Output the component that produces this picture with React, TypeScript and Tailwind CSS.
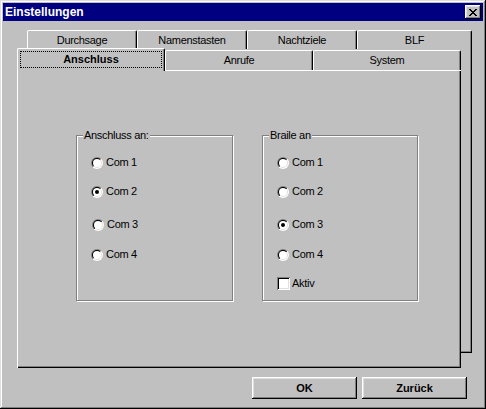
import React from "react";

const font = { fontFamily: '"Liberation Sans", Arial, sans-serif' };

function Radio({ checked }: { checked?: boolean }) {
  return (
    <svg width="12" height="12" viewBox="0 0 12 12" className="shrink-0">
      <defs>
        <linearGradient id="rg1" x1="0" y1="0" x2="1" y2="1">
          <stop offset="50%" stopColor="#808080" />
          <stop offset="50%" stopColor="#ffffff" />
        </linearGradient>
        <linearGradient id="rg2" x1="0" y1="0" x2="1" y2="1">
          <stop offset="50%" stopColor="#000000" />
          <stop offset="50%" stopColor="#dfdfdf" />
        </linearGradient>
      </defs>
      <circle cx="6" cy="6" r="6" fill="url(#rg1)" />
      <circle cx="6" cy="6" r="5" fill="url(#rg2)" />
      <circle cx="6" cy="6" r="4" fill="#ffffff" />
      {checked && <circle cx="6" cy="6" r="2" fill="#000000" />}
    </svg>
  );
}

function RadioRow({ label, checked, extra = "" }: { label: string; checked?: boolean; extra?: string }) {
  return (
    <div className={`flex h-[13px] items-center gap-[3px] ${extra}`}>
      <Radio checked={checked} />
      <span className="text-[11px] leading-none text-black tracking-[-0.3px]">{label}</span>
    </div>
  );
}

function GroupBox({ title, width, children }: { title: string; width: string; children: React.ReactNode }) {
  return (
    <div
      className={`relative ${width} h-[166px] border border-[#808080] shadow-[inset_1px_1px_#fff,1px_1px_#fff] pl-[14px] pt-[20px]`}
    >
      <span className="absolute -top-[7px] left-[6px] bg-[#c0c0c0] px-[1px] text-[11px] leading-[13px] text-black tracking-[-0.3px]">
        {title}
      </span>
      {children}
    </div>
  );
}

const tabBack =
  "flex h-[19px] items-center justify-center rounded-t-[2px] border-l border-t border-r border-l-white border-t-white border-r-black shadow-[inset_-1px_0_#808080] text-[11px] text-black tracking-[-0.3px]";

export default function App() {
  return (
    <div
      style={font}
      className="relative flex h-[409px] w-[486px] flex-col bg-[#c0c0c0] shadow-[inset_-1px_-1px_#000,inset_1px_1px_#dfdfdf,inset_-2px_-2px_#808080,inset_2px_2px_#fff]"
    >
      {/* Title bar */}
      <div className="mx-[3px] mt-[3px] flex h-[18px] items-center justify-between bg-[#000080] pl-[2px] pr-[2px]">
        <span className="text-[12px] font-bold leading-none text-white">Einstellungen</span>
        <div className="flex h-[14px] w-[16px] items-center justify-center bg-[#c0c0c0] shadow-[inset_-1px_-1px_#000,inset_1px_1px_#fff,inset_-2px_-2px_#808080,inset_2px_2px_#dfdfdf]">
          <svg width="8" height="7" viewBox="0 0 8 7" shapeRendering="crispEdges">
            <path
              d="M0 0h2v1h-2zM6 0h2v1h-2zM1 1h2v1h-2zM5 1h2v1h-2zM2 2h4v1h-4zM3 3h2v1h-2zM2 4h4v1h-4zM1 5h2v1h-2zM5 5h2v1h-2zM0 6h2v1h-2zM6 6h2v1h-2z"
              fill="#000"
            />
          </svg>
        </div>
      </div>

      {/* Tabs area */}
      <div className="ml-[17px] mt-[9px] grid">
        {/* Back layer */}
        <div className="col-start-1 row-start-1 ml-[10px] flex h-[323px] w-[445px] flex-col">
          <div className="flex">
            <div className={`${tabBack} w-[110px]`}>Durchsage</div>
            <div className={`${tabBack} w-[110px]`}>Namenstasten</div>
            <div className={`${tabBack} w-[110px]`}>Nachtziele</div>
            <div className={`${tabBack} w-[115px]`}>BLF</div>
          </div>
          <div className="flex-1 border-r border-b border-black shadow-[inset_-1px_-1px_#808080]"></div>
        </div>

        {/* Front layer */}
        <div className="col-start-1 row-start-1 mt-[18px] flex h-[320px] w-[444px] flex-col">
          <div className="flex items-end">
            <div className="relative z-10 -mb-px flex h-[23px] w-[148px] items-start justify-center rounded-t-[2px] border-l border-t border-r border-l-white border-t-white border-r-black bg-[#c0c0c0] px-[2px] pt-[2px] shadow-[inset_-1px_0_#808080]">
              <div className="flex h-[17px] w-full items-center justify-center border border-dotted border-black">
                <span className="text-[11px] font-bold text-black">Anschluss</span>
              </div>
            </div>
            <div className={`${tabBack} h-[20px] w-[148px]`}>Anrufe</div>
            <div className={`${tabBack} h-[20px] w-[148px]`}>System</div>
          </div>
          <div className="flex flex-1 gap-[29px] bg-[#c0c0c0] pl-[59px] pt-[65px] shadow-[inset_1px_1px_#fff,inset_-1px_-1px_#000,inset_-2px_-2px_#808080]">
            <GroupBox title="Anschluss an:" width="w-[157px]">
              <RadioRow label="Com 1" />
              <RadioRow label="Com 2" checked extra="mt-[16px]" />
              <RadioRow label="Com 3" extra="mt-[20px] ml-px" />
              <RadioRow label="Com 4" extra="mt-[17px]" />
            </GroupBox>
            <GroupBox title="Braile an" width="w-[156px]">
              <RadioRow label="Com 1" />
              <RadioRow label="Com 2" extra="mt-[16px]" />
              <RadioRow label="Com 3" checked extra="mt-[20px]" />
              <RadioRow label="Com 4" extra="mt-[17px]" />
              <div className="mt-[16px] flex h-[13px] items-center gap-[2px]">
                <div className="h-[13px] w-[13px] bg-white shadow-[inset_1px_1px_#808080,inset_-1px_-1px_#fff,inset_2px_2px_#000,inset_-2px_-2px_#dfdfdf]"></div>
                <span className="text-[11px] leading-none text-black tracking-[-0.3px]">Aktiv</span>
              </div>
            </GroupBox>
          </div>
        </div>
      </div>

      {/* Buttons */}
      <div className="mt-[9px] flex justify-end gap-[5px] pr-[19px]">
        <button className="flex h-[22px] w-[105px] items-center justify-center bg-[#c0c0c0] text-[11px] font-bold text-black shadow-[inset_-1px_-1px_#000,inset_1px_1px_#fff,inset_-2px_-2px_#808080,inset_2px_2px_#dfdfdf]">
          OK
        </button>
        <button className="flex h-[22px] w-[105px] items-center justify-center bg-[#c0c0c0] text-[11px] font-bold text-black shadow-[inset_-1px_-1px_#000,inset_1px_1px_#fff,inset_-2px_-2px_#808080,inset_2px_2px_#dfdfdf]">
          Zurück
        </button>
      </div>
    </div>
  );
}
